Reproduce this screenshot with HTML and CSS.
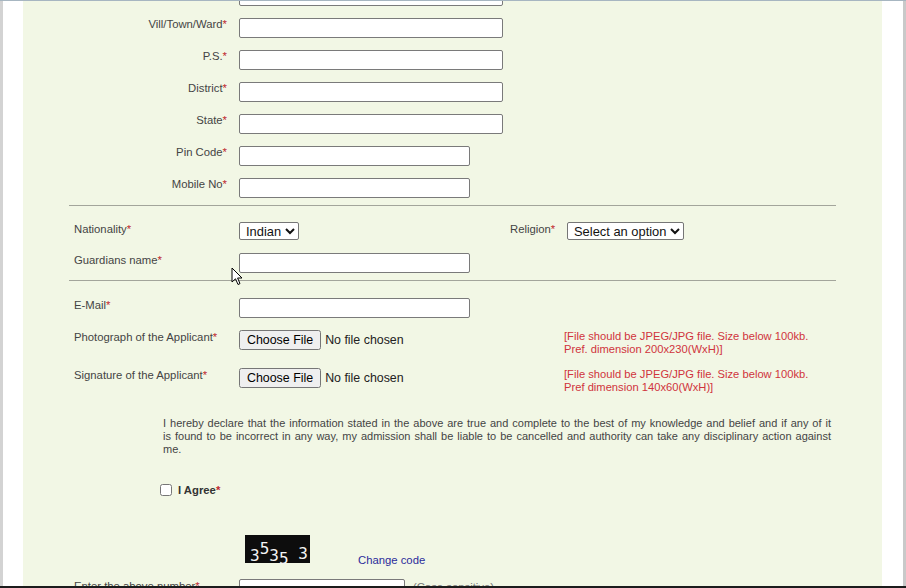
FILE: index.html
```html
<!DOCTYPE html>
<html>
<head>
  <meta charset="utf-8">
  <title>Admission Form</title>
  <link rel="stylesheet" href="styles.css">
</head>
<body>
  <div class="frame">
    <div class="panel">
      <form class="form">
        <!-- address block, labels right aligned -->
        <div class="addr">
          <label class="addr-label"></label>
          <input class="txt" type="text">
          <label class="addr-label">Vill/Town/Ward<span class="req">*</span></label>
          <input class="txt" type="text">
          <label class="addr-label">P.S.<span class="req">*</span></label>
          <input class="txt" type="text">
          <label class="addr-label">District<span class="req">*</span></label>
          <input class="txt" type="text">
          <label class="addr-label">State<span class="req">*</span></label>
          <input class="txt" type="text">
          <label class="addr-label">Pin Code<span class="req">*</span></label>
          <input class="txt short" type="text">
          <label class="addr-label">Mobile No<span class="req">*</span></label>
          <input class="txt short" type="text">
        </div>

        <hr class="sep">

        <div class="row nat-row">
          <label class="lbl">Nationality<span class="req">*</span></label>
          <div class="field nat-field">
            <select class="sel">
              <option>Indian</option>
            </select>
          </div>
          <label class="lbl rel-lbl">Religion<span class="req">*</span></label>
          <select class="sel">
            <option>Select an option</option>
          </select>
        </div>
        <div class="row guard-row">
          <label class="lbl">Guardians name<span class="req">*</span></label>
          <input class="txt short" type="text">
        </div>

        <hr class="sep">

        <div class="row mail-row">
          <label class="lbl">E-Mail<span class="req">*</span></label>
          <input class="txt short" type="text">
        </div>
        <div class="row file-row">
          <label class="lbl">Photograph of the Applicant<span class="req">*</span></label>
          <div class="field file-field"><input type="file"></div>
          <div class="note">[File should be JPEG/JPG file. Size below 100kb.<br>Pref. dimension 200x230(WxH)]</div>
        </div>
        <div class="row file-row sign-row">
          <label class="lbl">Signature of the Applicant<span class="req">*</span></label>
          <div class="field file-field"><input type="file"></div>
          <div class="note">[File should be JPEG/JPG file. Size below 100kb.<br>Pref dimension 140x60(WxH)]</div>
        </div>

        <p class="declare">
          <span class="ln">I hereby declare that the information stated in the above are true and complete to the best of my knowledge and belief and if any of it</span>
          <span class="ln">is found to be incorrect in any way, my admission shall be liable to be cancelled and authority can take any disciplinary action against</span>
          <span class="ln last">me.</span>
        </p>

        <label class="agree"><input type="checkbox" class="chk"> I Agree<span class="req">*</span></label>

        <div class="captcha-row">
          <div class="captcha"><span>3</span><span class="up">5</span><span>3</span><span class="down">5</span> <span class="tail">3</span></div>
          <a href="#" class="change">Change code</a>
        </div>

        <div class="row code-row">
          <label class="lbl">Enter the above number<span class="req">*</span></label>
          <input class="txt code" type="text">
          <span class="hint">(Case sensitive)</span>
        </div>
      </form>
    </div>
  </div>
  <div class="bottom-bar"></div>

  <svg class="cursor" width="12" height="19" viewBox="0 0 12 19">
    <path d="M1 1 L1 15 L4.5 11.8 L7 17.5 L9 16.6 L6.6 11 L11 11 Z" fill="#fff" stroke="#000" stroke-width="1" stroke-linejoin="round"/>
  </svg>
</body>
</html>
```

FILE: styles.css
```css
html, body {
  margin: 0;
  height: 100%;
}
body {
  display: flex;
  flex-direction: column;
  overflow: hidden;
  background: #fff;
  border-top: 1px solid #a7b6c1;
  box-sizing: border-box;
  font-family: "Liberation Sans", Arial, sans-serif;
  font-size: 11.3px;
  color: #444;
}
.frame {
  flex: 1;
  min-height: 0;
  display: flex;
  border-left: 3px solid #d3d3d3;
  border-right: 3px solid #c9c9c9;
  padding: 0 21px 0 20px;
  overflow: hidden;
}
.panel {
  flex: 1;
  background: #f2f7e5;
  padding: 0 46px;
}
.form {
  margin-top: -15px;
}
.req { color: #c0282f; }

/* text inputs */
.txt {
  box-sizing: border-box;
  width: 264px;
  height: 20px;
  margin: 0;
  border: 1px solid #7a7a7a;
  border-radius: 2px;
  background: #fff;
}
.txt.short { width: 231px; }
.sel {
  height: 18px;
  margin: 0;
  padding: 0 0 0 2px;
  font-family: "Liberation Sans", Arial, sans-serif;
  font-size: 12.9px;
  color: #111;
  border: 1px solid #767676;
  border-radius: 2px;
  background: #fff;
}

/* address block */
.addr {
  display: grid;
  grid-template-columns: 160px auto;
  column-gap: 10px;
  row-gap: 12px;
  align-items: start;
}
.addr-label {
  text-align: right;
  padding-right: 2px;
}

.sep {
  margin: 7px 0 0;
  border: 0;
  border-top: 1px solid #a3a59b;
  height: 0;
}

/* label + field rows */
.row {
  display: flex;
  align-items: flex-start;
  padding-left: 5px;
}
.lbl {
  width: 165px;
  flex: none;
  padding-top: 1px;
}
.nat-row { margin-top: 16px; }
.nat-field { width: 271px; }
.rel-lbl { width: 57px; }
.guard-row { margin-top: 13px; }
.mail-row { margin-top: 17px; }
.file-row { margin-top: 12px; }
.sign-row { margin-top: 12px; }
.file-field { width: 325px; }
.file-field input {
  display: block;
  margin: 0;
  font-family: "Liberation Sans", Arial, sans-serif;
  font-size: 12.4px;
  color: #222;
}
.note {
  color: #d0343c;
  font-size: 11.2px;
  line-height: 13px;
}

/* declaration, justified line by line */
.declare {
  margin: 23px 5px 0 94px;
  line-height: 13px;
  color: #444;
  font-size: 11px;
}
.declare .ln {
  display: block;
  white-space: nowrap;
  text-align: justify;
  text-align-last: justify;
}
.declare .ln.last { text-align-last: left; }
.agree {
  display: flex;
  align-items: center;
  margin: 28px 0 0 91px;
  font-weight: bold;
  color: #333;
  width: max-content;
}
.chk {
  width: 12px;
  height: 12px;
  margin: 0 6px 0 0;
}

.captcha-row {
  display: flex;
  align-items: flex-end;
  margin: 39px 0 0 176px;
}
.captcha {
  width: 65px;
  height: 28px;
  box-sizing: border-box;
  background: #0d0d0d;
  color: #f4f4f4;
  font-family: "DejaVu Sans Mono", monospace;
  font-size: 16px;
  line-height: 28px;
  padding-left: 5px;
  white-space: pre;
}
.captcha span { vertical-align: -2px; }
.captcha .up { vertical-align: 5px; }
.captcha .down { vertical-align: -5px; }
.captcha .tail { vertical-align: 0; }
.change {
  margin-left: 48px;
  color: #2b2b9b;
  text-decoration: none;
  line-height: 12px;
  margin-bottom: -3px;
}

.code-row { margin-top: 16px; }
.txt.code { width: 166px; }
.hint {
  margin-left: 8px;
  color: #777;
  padding-top: 2px;
}

.bottom-bar {
  height: 2px;
  background: #1c1c1c;
  flex: none;
}

/* mouse pointer sitting over the form */
.cursor {
  position: absolute;
  left: 231px;
  top: 267px;
}
```
